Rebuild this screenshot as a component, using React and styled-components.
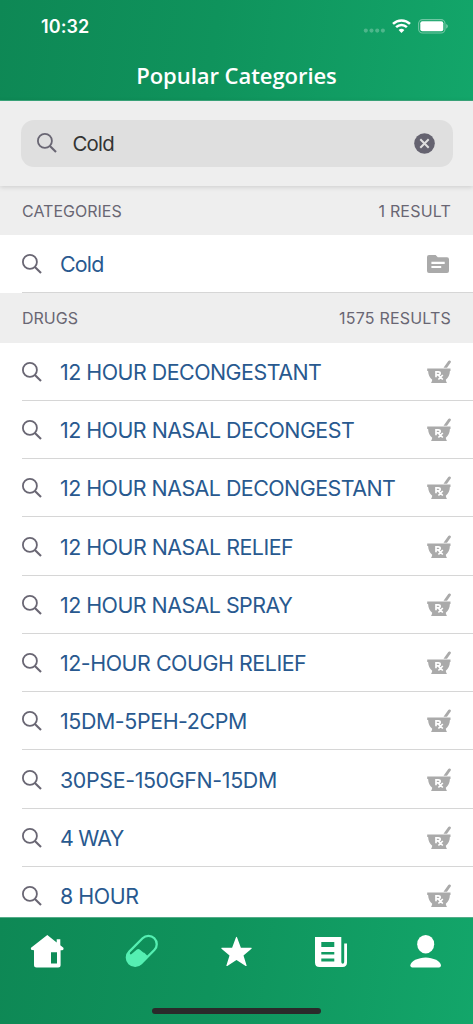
import React from "react";
import styled, { createGlobalStyle } from "styled-components";

const GlobalStyle = createGlobalStyle`
  * {
    box-sizing: border-box;
  }

  body {
    margin: 0;
    background: #ffffff;
    font-family: Inter, "Liberation Sans", sans-serif;
  }
`;

const green = "linear-gradient(98deg, #0e8855 0%, #0f935c 45%, #13a66a 100%)";

const Screen = styled.div`
  display: flex;
  flex-direction: column;
  width: 473px;
  height: 1024px;
  overflow: hidden;
  background: #ffffff;
`;

const Header = styled.header`
  flex: none;
  height: 101px;
  background: ${green};
  border-bottom: 1px solid #3ba87c;
  color: #ffffff;
`;

const StatusBar = styled.div`
  display: flex;
  justify-content: space-between;
  align-items: center;
  height: 52px;
  padding: 0 25px 0 41px;
`;

const Time = styled.span`
  font-size: 18px;
  font-weight: 600;
  letter-spacing: 0.1px;
`;

const StatusIcons = styled.div`
  display: flex;
  align-items: center;

  svg {
    display: block;
  }
`;

const Title = styled.h1`
  margin: 0;
  height: 46px;
  line-height: 46px;
  text-align: center;
  font-family: "Open Sans", sans-serif;
  font-size: 22px;
  font-weight: 600;
  letter-spacing: -0.05px;
`;

const SearchPanel = styled.div`
  position: relative;
  z-index: 1;
  flex: none;
  height: 85px;
  padding: 19px 20.5px 0;
  background: #eeeeee;
  box-shadow: 0 1px 5px rgba(0, 0, 0, 0.15);
`;

const SearchField = styled.div`
  display: flex;
  align-items: center;
  height: 47px;
  padding: 0 18px 1px 16px;
  border-radius: 13px;
  background: #dfdfdf;
`;

const Query = styled.span`
  flex: 1;
  margin-left: 16px;
  padding-top: 1px;
  font-size: 20.4px;
  letter-spacing: -0.8px;
  color: #333333;
`;

const Results = styled.main`
  flex: 1;
  min-height: 0;
  overflow: hidden;
`;

const SectionHeader = styled.div`
  display: flex;
  justify-content: space-between;
  align-items: center;
  height: ${(props) => props.$height || "49px"};
  padding: 1px 22px 0;
  background: #eeeeee;
  color: #696673;
  font-size: 16px;
`;

const ResultCount = styled.span`
  letter-spacing: 0.2px;
`;

const Row = styled.div`
  display: flex;
  height: 58.25px;
  padding-left: 22px;
`;

const RowBody = styled.div`
  display: flex;
  flex: 1;
  align-items: center;
  padding: 1px ${(props) => props.$right || "22px"} 0 0;
  border-bottom: 1px solid #d6d6d6;
`;

const RowLabel = styled.span`
  flex: 1;
  margin-left: 18px;
  font-size: 21.4px;
  letter-spacing: ${(props) => props.$spacing || "-0.5px"};
  white-space: nowrap;
  color: #28598f;
`;

const TabBar = styled.nav`
  flex: none;
  height: 107px;
  background: ${green};
  border-top: 1px solid #55ad89;
`;

const Tabs = styled.div`
  display: grid;
  grid-template-columns: repeat(5, 1fr);
  justify-items: center;
  padding-top: 16px;
  height: 90px;

  svg {
    display: block;
  }
`;

const HomeIndicator = styled.div`
  width: 169px;
  height: 6px;
  margin: 0 auto;
  border-radius: 3px;
  background: #2a2a2a;
`;

const SearchIcon = () => (
  <svg width="20" height="20" viewBox="0 0 20 20" fill="none" stroke="#696673">
    <circle cx="7.9" cy="7.9" r="7" strokeWidth="1.8" />
    <path d="M12.9 12.9 19 19" strokeWidth="2.1" />
  </svg>
);

const ClearIcon = () => (
  <svg width="21" height="21" viewBox="0 0 21 21">
    <circle cx="10.5" cy="10.5" r="10.3" fill="#656370" />
    <path d="m6.3 6.3 8.4 8.4m0-8.4-8.4 8.4" stroke="#dfdfdf" strokeWidth="2" />
  </svg>
);

const FolderIcon = () => (
  <svg width="22" height="18" viewBox="0 0 22 18">
    <path
      d="M2 0h6.6l2.2 2.2H20a2 2 0 0 1 2 2V16a2 2 0 0 1-2 2H2a2 2 0 0 1-2-2V2a2 2 0 0 1 2-2Z"
      fill="#aaaaaa"
    />
    <path d="M4.4 7.9h13.3M4.4 12h9.8" stroke="#ffffff" strokeWidth="2.1" />
  </svg>
);

const MortarIcon = () => (
  <svg width="24" height="24" viewBox="0 0 24 24" fill="#aaaaaa">
    <path d="m16.5 7.7 4.8-6.600c1-1.400 3.400-.1 2.400 1.500L20 7.700Z" />
    <path d="M.2 8.500h23.300v2.600h-.6c-.2 4-1.500 6.500-4.100 8.600.2 1.500.7 2.500 1.300 3.300H3.900c.6-.8 1.100-1.800 1.300-3.300-2.600-2.100-3.900-4.600-4.100-8.600H.2Z" />
    <g fill="none" stroke="#ffffff" strokeWidth="1.7">
      <path d="M9 17.300v-5.500h2.300c2.500 0 2.500 3 0 3H9m2 0 4.800 4.700m0-4.500-4.400 4.500" />
    </g>
  </svg>
);

const Signal = () => (
  <svg width="22" height="16" viewBox="0 0 22 16" fill="#ffffff" opacity="0.25">
    <circle cx="2.8" cy="12.6" r="2.05" />
    <circle cx="8.5" cy="12.6" r="2.05" />
    <circle cx="14.2" cy="12.6" r="2.05" />
    <circle cx="19.9" cy="12.6" r="2.05" />
  </svg>
);

const WifiSvg = styled.svg`
  margin-left: 7.5px;
`;

const Wifi = () => (
  <WifiSvg width="19" height="14" viewBox="0 0 19 14">
    <g fill="none" stroke="#ffffff" strokeWidth="2.5">
      <path d="M1 4.900a12.200 12.200 0 0 1 17 0" />
      <path d="M4.100 8.200a7.800 7.800 0 0 1 10.800 0" />
    </g>
    <path d="M9.500 13.900 6.600 11a4.300 4.300 0 0 1 5.800 0Z" fill="#ffffff" />
  </WifiSvg>
);

const BatterySvg = styled.svg`
  margin-left: 7px;
`;

const Battery = () => (
  <BatterySvg width="30" height="15" viewBox="0 0 30 15">
    <rect
      x="0.6"
      y="0.6"
      width="26.4"
      height="13.4"
      rx="4"
      fill="none"
      stroke="#ffffff"
      strokeOpacity="0.4"
      strokeWidth="1.1"
    />
    <rect x="2.3" y="2.3" width="23" height="10" rx="2" fill="#ffffff" />
    <path d="M28.3 5v4.600c1.900-.8 1.900-3.800 0-4.600Z" fill="#ffffff" opacity="0.5" />
  </BatterySvg>
);

const HomeIcon = () => (
  <svg width="34" height="34" viewBox="0 0 34 34" fill="#ffffff">
    <path
      fillRule="evenodd"
      d="M17.300 1 1 13.800c-.6 1.900.3 2.400 3 2.400V31q0 2.500 2.500 2.500h21.600q2.500 0 2.500-2.500V16.200c2.600 0 3.400-.5 2.800-2.500l-3.100-2.500V5.200h-3.600v3.200ZM21 18.300h6v11.200h-6Z"
    />
  </svg>
);

const PillIcon = () => (
  <svg width="34" height="34" viewBox="0 0 34 34">
    <rect
      x="8.5"
      y="-0.9"
      width="16.6"
      height="35.4"
      rx="8.3"
      fill="none"
      stroke="#55efb2"
      strokeWidth="2.3"
      transform="rotate(45 16.8 16.8)"
    />
    <path
      d="M4.300 17.600 5 20q.7.900 1.600.1l5.300-4.600q1.400-1.100 2.800 0l3.600 3.100 1 .1 3.300 3.300-6.300 7.800A8.300 8.300 0 0 1 4.300 17.600Z"
      fill="#55efb2"
    />
  </svg>
);

const StarIcon = () => (
  <svg width="34" height="34" viewBox="0 0 33 34" fill="#ffffff">
    <path d="M16.500 3.300q.5-1 1 0l3.900 10.400 10.300.1q1 .2.300 1l-8 6.700 3.100 9.900q.1 1-.9.500L17 26l-9.200 5.900q-1 .4-.9-.5L10 21.500l-8-6.700q-.6-.8.300-1l10.300-.1Z" />
  </svg>
);

const NewsIcon = () => (
  <svg width="34" height="34" viewBox="0 0 34 34" fill="#ffffff">
    <path
      fillRule="evenodd"
      d="M1 3h26.300v24.500c0 3 2.900 3 2.900 0V9.600H33v19q0 4.400-4.500 4.400H5.500Q1 33 1 28.500Zm6.300 5v5h13V8Zm0 10v2.500h13V18Zm0 6.500v3h13v-3Z"
    />
  </svg>
);

const UserIcon = () => (
  <svg width="34" height="34" viewBox="0 0 34 34" fill="#ffffff">
    <ellipse cx="16.7" cy="10.2" rx="8.5" ry="9.3" />
    <path d="M1.300 31.500C1.300 27 9.600 23.400 16.700 23.400S32 27 32 31.500q-.2 2-2 2H3.300q-1.800 0-2-2Z" />
  </svg>
);

const drugs = [
  { name: "12 HOUR DECONGESTANT", spacing: "-0.5px" },
  { name: "12 HOUR NASAL DECONGEST", spacing: "-0.51px" },
  { name: "12 HOUR NASAL DECONGESTANT", spacing: "-0.52px" },
  { name: "12 HOUR NASAL RELIEF", spacing: "-0.5px" },
  { name: "12 HOUR NASAL SPRAY", spacing: "-0.52px" },
  { name: "12-HOUR COUGH RELIEF", spacing: "-0.45px" },
  { name: "15DM-5PEH-2CPM", spacing: "-0.4px" },
  { name: "30PSE-150GFN-15DM", spacing: "-0.36px" },
  { name: "4 WAY", spacing: "-0.8px" },
  { name: "8 HOUR", spacing: "-0.45px" },
];

function App() {
  return (
    <>
      <GlobalStyle />
      <Screen>
        <Header>
          <StatusBar>
            <Time>10:32</Time>
            <StatusIcons>
              <Signal />
              <Wifi />
              <Battery />
            </StatusIcons>
          </StatusBar>
          <Title>Popular Categories</Title>
        </Header>
        <SearchPanel>
          <SearchField>
            <SearchIcon />
            <Query>Cold</Query>
            <ClearIcon />
          </SearchField>
        </SearchPanel>
        <Results>
          <SectionHeader>
            <span>CATEGORIES</span>
            <ResultCount>1 RESULT</ResultCount>
          </SectionHeader>
          <Row>
            <RowBody $right="24px">
              <SearchIcon />
              <RowLabel $spacing="-0.8px">Cold</RowLabel>
              <FolderIcon />
            </RowBody>
          </Row>
          <SectionHeader $height="49.4px">
            <span>DRUGS</span>
            <ResultCount>1575 RESULTS</ResultCount>
          </SectionHeader>
          {drugs.map((drug) => (
            <Row key={drug.name}>
              <RowBody>
                <SearchIcon />
                <RowLabel $spacing={drug.spacing}>{drug.name}</RowLabel>
                <MortarIcon />
              </RowBody>
            </Row>
          ))}
        </Results>
        <TabBar>
          <Tabs>
            <HomeIcon />
            <PillIcon />
            <StarIcon />
            <NewsIcon />
            <UserIcon />
          </Tabs>
          <HomeIndicator />
        </TabBar>
      </Screen>
    </>
  );
}

export default App;
